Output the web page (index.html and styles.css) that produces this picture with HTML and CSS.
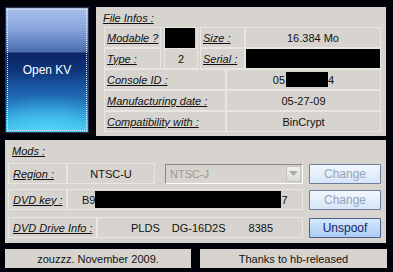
FILE: index.html
```html
<!DOCTYPE html>
<html>
<head>
<meta charset="utf-8">
<link rel="stylesheet" href="styles.css">
</head>
<body>
<div class="app">
  <div class="top">
    <button class="open-kv">Open KV</button>
    <section class="panel info">
      <div class="title">File Infos :</div>
      <div class="grid-a">
        <div class="cell label">Modable ?</div>
        <div class="cell val"><span class="redact modable"></span></div>
        <div class="cell label">Size :</div>
        <div class="cell val center">16.384 Mo</div>
        <div class="cell label">Type :</div>
        <div class="cell val center">2</div>
        <div class="cell label">Serial :</div>
        <div class="cell val"><span class="redact serial"></span></div>
      </div>
      <div class="grid-b">
        <div class="cell label">Console ID :</div>
        <div class="cell val center">05<span class="redact cid"></span>4</div>
        <div class="cell label">Manufacturing date :</div>
        <div class="cell val center">05-27-09</div>
        <div class="cell label">Compatibility with :</div>
        <div class="cell val center">BinCrypt</div>
      </div>
    </section>
  </div>
  <section class="panel mods">
    <div class="title">Mods :</div>
    <div class="row r1">
      <div class="cell label w59">Region :</div>
      <div class="cell val center region-val">NTSC-U</div>
      <div class="combo"><span class="combo-text">NTSC-J</span><span class="combo-arrow"><svg width="9" height="5" viewBox="0 0 9 5"><path d="M0 0h9L4.5 5z" fill="#a8a8a8"/></svg></span></div>
      <button class="btn disabled">Change</button>
    </div>
    <div class="row r2">
      <div class="cell label w59">DVD key :</div>
      <div class="cell val key-val">B9<span class="redact key"></span>7</div>
      <button class="btn disabled">Change</button>
    </div>
    <div class="row r3">
      <div class="cell label w89">DVD Drive Info :</div>
      <div class="cell val drive-val"><span>PLDS</span><span class="d2">DG-16D2S</span><span class="d3">8385</span></div>
      <button class="btn active">Unspoof</button>
    </div>
  </section>
  <div class="footer">
    <div class="fbox left">zouzzz. November 2009.</div>
    <div class="fbox right">Thanks to hb-released</div>
  </div>
</div>
</body>
</html>
```

FILE: styles.css
```css
html, body {
  margin: 0;
  padding: 0;
  background: #02030a;
}
body {
  width: 393px;
  height: 272px;
  overflow: hidden;
  font-family: "Liberation Sans", Arial, sans-serif;
  font-size: 11px;
  color: #111;
}
.app {
  padding: 7px 6px 0 5px;
  display: flex;
  flex-direction: column;
}
.top {
  display: flex;
  gap: 7px;
  align-items: flex-start;
}
.open-kv {
  width: 84px;
  height: 126px;
  margin: 0;
  padding: 0;
  border: 1px solid #253457;
  outline: 1px dotted #e8eefc;
  outline-offset: -3px;
  color: #fff;
  font-family: "Liberation Sans", Arial, sans-serif;
  font-size: 12px;
  background:
    radial-gradient(ellipse 70px 40px at 50% 126px, rgba(80, 215, 250, 0.9), rgba(80, 215, 250, 0) 100%),
    linear-gradient(to bottom, #a9c0ea 0px, #8aa6dc 20px, #5b7dbe 38px, #4868ab 44px, #0b2465 45px, #0e3478 62px, #1a5aa6 80px, #2680c4 100px, #38b0e2 116px, #46c8f0 126px);
  box-sizing: border-box;
}
.panel {
  background: #d7d4cf;
  box-sizing: border-box;
}
.title {
  font-style: italic;
  text-decoration: underline;
  height: 17px;
  line-height: 17px;
}
.info {
  width: 290px;
  height: 129px;
  padding: 3px 5px 0 8px;
}
.info .title {
  margin-left: -1px;
}
.cell {
  box-sizing: border-box;
  border: 1px solid #e8e6e1;
  display: flex;
  align-items: center;
  height: 21px;
  white-space: nowrap;
}
.label {
  font-style: italic;
  text-decoration: underline;
  padding-left: 2px;
}
.center {
  justify-content: center;
}
.grid-a {
  display: grid;
  grid-template-columns: 57px 3px 34px 2px 45px 136px;
  grid-auto-rows: 21px;
}
.grid-a > .cell:nth-child(4n+1) { grid-column: 1; }
.grid-a > .cell:nth-child(4n+2) { grid-column: 3; }
.grid-a > .cell:nth-child(4n+3) { grid-column: 5; }
.grid-a > .cell:nth-child(4n+4) { grid-column: 6; }
.grid-b {
  display: grid;
  grid-template-columns: 122px 155px;
  grid-auto-rows: 21px;
}
.redact {
  display: inline-block;
  background: #000;
}
.modable {
  width: 30px;
  height: 20px;
}
.serial {
  width: 135px;
  height: 19px;
}
.cid {
  width: 42px;
  height: 15px;
  margin: 0 0 1px 1px;
}
.mods {
  width: 381px;
  height: 103px;
  margin-top: 4px;
  padding: 3px 5px 0 3px;
}
.mods .title {
  margin-left: 4px;
  height: 20px;
  line-height: 17px;
}
.row {
  display: flex;
  align-items: center;
  height: 21px;
}
.r2 { margin-top: 5px; }
.r3 { margin-top: 7px; }
.w59 { width: 59px; flex: none; padding-left: 4px; }
.w89 { width: 89px; flex: none; padding-left: 4px; }
.region-val { width: 88px; flex: none; }
.combo {
  box-sizing: border-box;
  width: 138px;
  height: 20px;
  margin-left: 10px;
  border: 1px solid;
  border-color: #8a8884 #fdfdfd #fdfdfd #8a8884;
  background: #d7d4cf;
  display: flex;
  align-items: center;
  color: #9a9893;
  font-size: 11px;
}
.combo-text {
  flex: 1;
  padding-left: 4px;
}
.combo-arrow {
  width: 15px;
  height: 16px;
  margin-right: 1px;
  box-sizing: border-box;
  border: 1px solid #c4c2bc;
  background: linear-gradient(#f2f1ee, #dcdad5);
  display: flex;
  align-items: center;
  justify-content: center;
}
.btn {
  box-sizing: border-box;
  width: 72px;
  height: 20px;
  margin: 0 0 0 6px;
  padding: 0;
  flex: none;
  font-family: "Liberation Sans", Arial, sans-serif;
  font-size: 12px;
  border: 1px solid #6c7d9c;
  border-radius: 1px;
}
.btn.disabled {
  color: #98a3b6;
  background: linear-gradient(#f2f7fe, #d6e5f8);
}
.btn.active {
  color: #13226a;
  background: linear-gradient(#d6e8fc, #a8cbf3);
  border-color: #4d6288;
}
.key-val {
  width: 236px;
  flex: none;
  padding-left: 14px;
}
.key {
  width: 186px;
  height: 17px;
}
.drive-val {
  width: 206px;
  flex: none;
  padding-left: 33px;
}
.d2 { margin-left: 12px; }
.d3 { margin-left: 23px; }
.footer {
  display: flex;
  gap: 9px;
  margin-top: 6px;
}
.fbox {
  height: 19px;
  background: #d7d4cf;
  display: flex;
  align-items: center;
  justify-content: center;
  color: #111;
}
.left { width: 186px; }
.right { width: 187px; }
```
